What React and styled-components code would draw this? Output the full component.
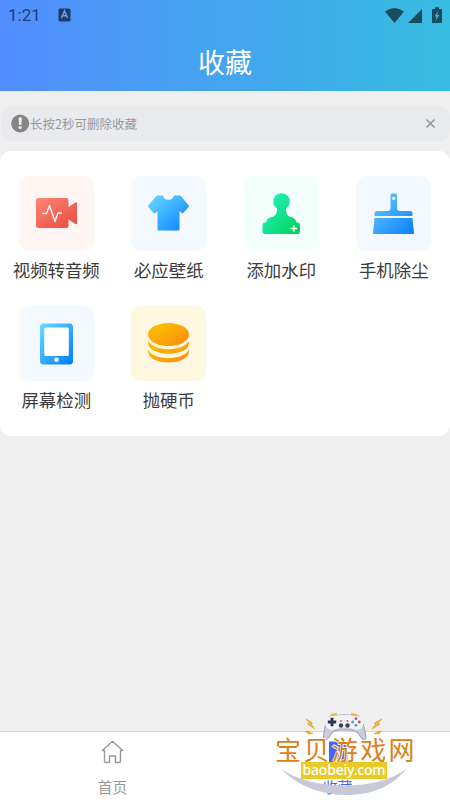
import React from 'react';
import styled, { createGlobalStyle } from 'styled-components';

const GlobalStyle = createGlobalStyle`
  * {
    box-sizing: border-box;
  }

  body {
    margin: 0;
    background: #efefef;
    font-family: 'Noto Sans CJK SC', sans-serif;
  }
`;

const Screen = styled.div`
  display: flex;
  flex-direction: column;
  width: 450px;
  height: 800px;
  overflow: hidden;
  background: #efefef;
`;

const Header = styled.header`
  height: 91px;
  background: linear-gradient(90deg, #528dff, #36bce0);
`;

const StatusBar = styled.div`
  display: flex;
  align-items: center;
  height: 31px;
  padding: 0 6px 0 8px;
`;

const Clock = styled.span`
  width: 50px;
  font: 400 17px/33px Roboto, sans-serif;
  color: #223f70;
`;

const StatusIcons = styled.div`
  display: flex;
  margin-left: auto;
  margin-top: -2px;
`;

const Title = styled.h1`
  margin: 0;
  font-size: 27px;
  font-weight: 400;
  line-height: 61px;
  text-align: center;
  color: #fff;
`;

const Notice = styled.div`
  display: flex;
  align-items: center;
  height: 35px;
  margin: 15px 0 10px 1px;
  padding: 0 14px 0 10px;
  border-radius: 10px;
  background: #e8eaee;
`;

const NoticeText = styled.span`
  flex: 1;
  font-size: 12.5px;
  line-height: 35px;
  color: #999;
`;

const Card = styled.main`
  display: grid;
  grid-template-columns: repeat(4, 1fr);
  grid-auto-rows: 130px;
  height: 285px;
  padding-top: 25px;
  border-radius: 11px;
  background: #fff;
`;

const Tool = styled.div`
  display: flex;
  flex-direction: column;
  align-items: center;
`;

const Tile = styled.div`
  width: 75px;
  height: 75px;
  border-radius: 10px;
  background: ${props => props.$tint};

  svg {
    display: block;
  }
`;

const ToolName = styled.span`
  font-size: 17.4px;
  line-height: 38px;
  color: #3c3c3c;
  white-space: nowrap;
`;

const TabBar = styled.nav`
  position: relative;
  display: flex;
  height: 69px;
  margin-top: auto;
  border-top: 1px solid #d8d8d8;
  background: #fff;
`;

const Tab = styled.div`
  flex: 1;
  display: flex;
  flex-direction: column;
  align-items: center;
  padding-top: 8px;
  font-size: 14.8px;
  line-height: 22px;
  color: ${props => (props.$active ? '#4b68ef' : '#999')};

  svg {
    margin-bottom: 12px;
  }
`;

const Watermark = styled.div`
  position: absolute;
  top: -23px;
  left: 270px;
  width: 150px;
  height: 92px;
`;

const WatermarkArt = styled.svg`
  position: absolute;
  top: 0;
  left: 0;
`;

const WatermarkName = styled.div`
  position: absolute;
  top: 26px;
  left: 5px;
  font-size: 26px;
  font-weight: 400;
  line-height: 28px;
  letter-spacing: 2.4px;
  white-space: nowrap;
  color: #dd7f18;
  -webkit-text-stroke: 1.5px #fff;
  paint-order: stroke fill;
`;

const WatermarkSite = styled.div`
  position: absolute;
  top: 53px;
  left: 31px;
  width: 86px;
  height: 17px;
  font: 500 14px/15px 'Noto Sans', sans-serif;
  letter-spacing: -0.2px;
  text-align: center;
  color: #fff;
  background: #e8cb28;
`;

const Gradient = ({ id, from, to }) => (
  <linearGradient id={id} x1="0" y1="0" x2="1" y2="1">
    <stop offset="0" stopColor={from} />
    <stop offset="1" stopColor={to} />
  </linearGradient>
);

const VideoIcon = () => (
  <svg width="75" height="75">
    <Gradient id="video" from="#ff8673" to="#e64c40" />
    <path
      fill="url(#video)"
      d="M19.500 22H47q2.500 0 2.500 2.500v6.500l7-4.500q1.500-.8 1.500.8v20q0 1.600-1.500.8l-7-4.500v6q0 2.500-2.500 2.500H19.500q-2.500 0-2.500-2.500V24.500q0-2.500 2.500-2.500z"
    />
    <path
      d="M23.500 37.500h4l3-8 5.500 16 3-8.500h4"
      fill="none"
      stroke="#fff"
      strokeWidth="1.300"
      strokeLinejoin="round"
    />
  </svg>
);

const ShirtIcon = () => (
  <svg width="75" height="75">
    <Gradient id="shirt" from="#6bdbff" to="#087fff" />
    <path
      fill="url(#shirt)"
      d="M26.500 19.500H32q1 4.200 5.500 4.200T43 19.500h5q1-.2 2 .7l7.500 9q1 1 0 2l-5 5.500q-1 1-2 0l-2-1.500v18.600q0 .7-.7.700H27.200q-.7 0-.7-.7V35.200l-2 1.500q-1 1-2 0l-5-5.500q-1-1 0-2l7.500-9q.7-.7 1.500-.7z"
    />
  </svg>
);

const StampIcon = () => (
  <svg width="75" height="75">
    <Gradient id="stamp" from="#25f5c4" to="#00d15a" />
    <path
      fill="url(#stamp)"
      d="M33 32.500a8.300 8.300 0 1 1 9 0q-.5 6.500 4 8.500 5.500.5 6.500 5.500h1q2.500.2 2.500 2.700v6.600q0 2.200-2.200 2.200H20.700q-2.200 0-2.200-2.200v-6.600q0-2.500 2.500-2.700h1q1-5 6.500-5.500 5-2 4.500-8.500z"
    />
    <path d="M46.500 52.500H53M49.750 49.250v6.500" stroke="#fff" strokeWidth="1.600" />
  </svg>
);

const BrushIcon = () => (
  <svg width="75" height="75">
    <Gradient id="brush" from="#6dccff" to="#087fff" />
    <path
      fill="url(#brush)"
      d="M35.500 17.500h4q1.500 0 1.500 1.500v13q0 3 3.500 3h9.500q2.500 0 2.500 2.500V40h-38v-2.500q0-2.500 2.500-2.500H31q3.500 0 3.500-3V19q0-1.500 1-1.500zM18.500 42h38L58 57q0 1-1 1H18q-1 0-1-1z"
    />
    <circle cx="37.700" cy="22.300" r="1.600" fill="#fff" />
  </svg>
);

const TabletIcon = () => (
  <svg width="75" height="75">
    <Gradient id="tablet" from="#6bdbff" to="#007bff" />
    <rect x="21" y="17.500" width="33" height="41" rx="3.500" fill="url(#tablet)" />
    <rect x="25.300" y="21.500" width="24.500" height="28.500" rx="1.500" fill="#fff" />
    <circle cx="37.500" cy="53.800" r="2.200" fill="#fff" />
  </svg>
);

const CoinsIcon = () => (
  <svg width="75" height="75">
    <Gradient id="coins" from="#ffc500" to="#fb8a10" />
    <ellipse cx="37.500" cy="28.500" rx="20.500" ry="11.500" fill="url(#coins)" />
    <path
      fill="url(#coins)"
      d="M17 34.500c5 11.500 36 11.500 41 0v3c-1 13.500-40 13.500-41 0zM17 43.500c5 11.500 36 11.500 41 0v2c-1 14.700-40 14.700-41 0z"
    />
  </svg>
);

const TOOLS = [
  { name: '视频转音频', tint: '#fff5f3', Icon: VideoIcon },
  { name: '必应壁纸', tint: '#f4f9ff', Icon: ShirtIcon },
  { name: '添加水印', tint: '#f2fffb', Icon: StampIcon },
  { name: '手机除尘', tint: '#f4f9ff', Icon: BrushIcon },
  { name: '屏幕检测', tint: '#f4f9ff', Icon: TabletIcon },
  { name: '抛硬币', tint: '#fff7df', Icon: CoinsIcon }
];

const App = () => (
  <>
    <GlobalStyle />
    <Screen>
      <Header>
        <StatusBar>
          <Clock>1:21</Clock>
          <svg width="13" height="15">
            <rect x=".5" y=".5" width="12" height="13" rx="1.500" fill="#213c69" />
            <path
              d="M3.500 10l3-7 3 7M4.700 7.700h3.600"
              fill="none"
              stroke="#62a2f5"
              strokeWidth="1.500"
            />
          </svg>
          <StatusIcons>
            <svg width="60" height="18" fill="#1a4c5d">
              <path d="M1 5.500Q10.500-1.500 20 5.500L10.500 17zM38 3v14H24zM48 4q0-1 1-1h2V1.200h4V3h2q1 0 1 1v12q0 1-1 1h-8q-1 0-1-1z" />
              <path d="M54 5l-3.500 5.500h2L51.500 15l4-6h-2.200z" fill="#3bb3e4" />
            </svg>
          </StatusIcons>
        </StatusBar>
        <Title>收藏</Title>
      </Header>
      <Notice>
        <svg width="19" height="19">
          <circle cx="9.200" cy="9.500" r="9" fill="#858585" />
          <path d="M7.500 3.500h3.400l-.6 7.500H8.100z" fill="#eee" />
          <circle cx="9.200" cy="13.500" r="1.600" fill="#eee" />
        </svg>
        <NoticeText>长按2秒可删除收藏</NoticeText>
        <svg width="11" height="11">
          <path d="M1.500 1.500l8 8M9.500 1.500l-8 8" stroke="#999" strokeWidth="1.700" />
        </svg>
      </Notice>
      <Card>
        {TOOLS.map(({ name, tint, Icon }) => (
          <Tool key={name}>
            <Tile $tint={tint}>
              <Icon />
            </Tile>
            <ToolName>{name}</ToolName>
          </Tool>
        ))}
      </Card>
      <TabBar>
        <Tab>
          <svg width="24" height="24" fill="none" stroke="#999" strokeWidth="1.400">
            <path
              d="M3.500 10.500H1.300L11.500 1.300l10.200 9.200h-2.200V21q0 1.500-1.500 1.500h-3.500V16h-6v6.500H5Q3.500 22.500 3.500 21z"
              strokeLinejoin="round"
            />
          </svg>
          首页
        </Tab>
        <Tab $active>
          <svg width="24" height="24">
            <path d="M3 1.500h18.500v20.500H3z" fill="#4a65f5" />
            <path d="M8.500 18l3.500-7 3.500 7" fill="none" stroke="#fff" strokeWidth="1.500" />
          </svg>
          收藏
        </Tab>
        <Watermark>
          <WatermarkArt width="150" height="92">
            <path d="M11 60Q36 76.500 75 76.500T137 59.500Q115 86 78 86Q37 86 11 60z" fill="#c7c9d8" />
            <path
              d="M60 7q14-2.500 29 0 4 3 7 20 .5 4-2.500 4-3-1.500-5-6.500-4-3.500-8-3.500H69q-4 0-7.500 3.500-2.500 5-5.500 6.500-3 0-2.500-4 2-17 6.500-20z"
              fill="#c9ccda"
              stroke="#8f91a3"
              strokeWidth=".8"
            />
            <path d="M61 7q13-2 27 0 5 1.500 5.500 7-.5 7-7 7-5-2.500-12-2.500T62 21q-6.500 0-7-7 .5-5.500 6-7z" fill="#f1f1f6" />
            <path d="M61 6l6-1M81 5l6 1" stroke="#eeb64d" strokeWidth="1.800" />
            <path d="M62 8.800v8.400M57.800 13h8.400" stroke="#263947" strokeWidth="2.900" />
            <circle cx="71" cy="16.500" r="2.200" fill="#334554" />
            <circle cx="77.500" cy="16.500" r="2.200" fill="#334554" />
            <circle cx="71" cy="12" r="1" fill="#d94f6a" />
            <circle cx="77.500" cy="12" r="1" fill="#d94f6a" />
            <circle cx="86" cy="9.700" r="1.400" fill="#d94555" />
            <circle cx="89.300" cy="13" r="1.400" fill="#d94555" />
            <circle cx="82.700" cy="13" r="1.400" fill="#3ca7b2" />
            <circle cx="86" cy="16.300" r="1.400" fill="#3ca7b2" />
            <path
              d="M36 10l6.500 4-1 1.500 3 4-7-4.500 1.500-1.500zM112 10l-7.500 4 1 1.500-3.500 4.500 8-5-1.500-1.500zM35 22.500l4-.5v1l4 1.500-5 .5v-1zM112 22.500l-4-.5v1l-4 1.500 5 .5v-1z"
              fill="#f5b62f"
              stroke="#e79b27"
              strokeWidth=".7"
            />
          </WatermarkArt>
          <WatermarkName>宝贝游戏网</WatermarkName>
          <WatermarkSite>baobeiy.com</WatermarkSite>
        </Watermark>
      </TabBar>
    </Screen>
  </>
);

export default App;
